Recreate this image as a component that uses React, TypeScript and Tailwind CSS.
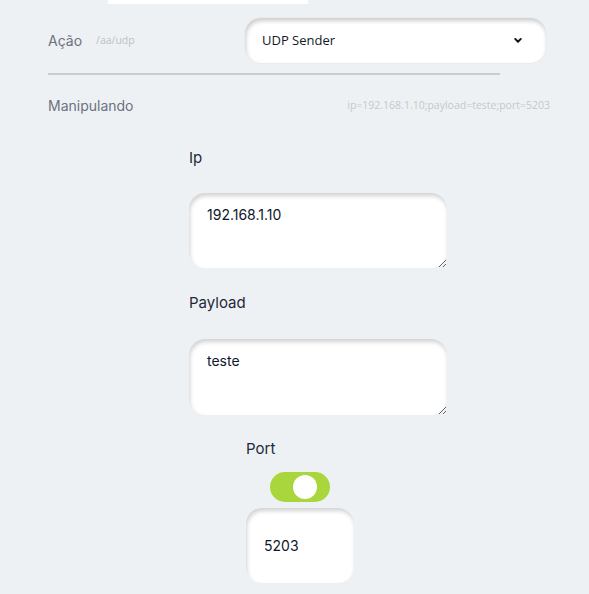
import { useState } from 'react';

const App = () => {
  const [enabled, setEnabled] = useState(true);

  return (
    <div className="min-h-screen w-full bg-[#eef1f4] font-['Inter',sans-serif]">
      {/* top strip */}
      <div className="ml-[108px] h-[4px] w-[200px] bg-white" />

      {/* Ação row */}
      <div className="flex items-center pl-[48px] pr-[43px] pt-[14px]">
        <span className="text-[14px] text-[#6b7280]">Ação</span>
        <span className="ml-[14px] font-['Open_Sans',sans-serif] text-[10.5px] text-[#bcc0c6]">/aa/udp</span>
        <div className="relative ml-auto flex h-[45px] w-[301px] items-center rounded-[16px] bg-white pl-[17px] shadow-[inset_1px_3px_4px_rgba(0,0,0,0.2),0_0_0_1px_rgba(0,0,0,0.02)]">
          <span className="font-['Open_Sans',sans-serif] text-[13px] text-[#111827]">UDP Sender</span>
          <svg className="absolute right-[24px] top-[19px] h-[7px] w-[8px]" viewBox="0 0 10 8" fill="none">
            <path d="M1.5 2 L5 5.5 L8.5 2" stroke="#111" strokeWidth="2.4" strokeLinecap="round" strokeLinejoin="round" />
          </svg>
        </div>
      </div>

      {/* divider */}
      <div className="ml-[48px] mt-[10px] h-[2px] w-[452px] bg-[#c9cdd2]" />

      {/* Manipulando row */}
      <div className="flex items-center justify-between pl-[48px] pr-[39px] pt-[20px]">
        <span className="text-[14px] text-[#6b7280]">Manipulando</span>
        <span className="font-['Open_Sans',sans-serif] text-[10.5px] text-[#c4c8cd]">ip=192.168.1.10;payload=teste;port=5203</span>
      </div>

      {/* fields */}
      <div className="ml-[189px] mt-[32px] flex flex-col">
        <label className="text-[15px] leading-[20px] text-[#1e293b]">Ip</label>
        <textarea
          defaultValue="192.168.1.10"
          className="mt-[25px] h-[75px] w-[258px] rounded-[16px] bg-white px-[18px] pt-[11px] text-[14px] text-[#0f172a] outline-none shadow-[inset_1px_3px_4px_rgba(0,0,0,0.18)]"
        />

        <label className="mt-[25px] text-[15px] leading-[20px] text-[#1e293b]">Payload</label>
        <textarea
          defaultValue="teste"
          className="mt-[26px] h-[76px] w-[258px] rounded-[16px] bg-white px-[18px] pt-[11px] text-[14px] text-[#0f172a] outline-none shadow-[inset_1px_3px_4px_rgba(0,0,0,0.18)]"
        />

        <div className="ml-[57px] mt-[24px] flex w-[108px] flex-col">
          <label className="text-[15px] leading-[20px] text-[#1e293b]">Port</label>
          <button
            onClick={() => setEnabled(!enabled)}
            className={`ml-[24px] mt-[13px] flex h-[30px] w-[60px] items-center rounded-full ${enabled ? 'bg-[#a9d63c]' : 'bg-gray-300'}`}
          >
            <span className={`block h-[24px] w-[24px] rounded-full bg-white ${enabled ? 'ml-[23px]' : 'ml-[3px]'}`} />
          </button>
          <input
            defaultValue="5203"
            className="mt-[6px] h-[75px] w-[108px] rounded-[16px] bg-white px-[18px] text-[14px] text-[#0f172a] outline-none shadow-[inset_1px_3px_4px_rgba(0,0,0,0.18)]"
          />
        </div>
      </div>
    </div>
  );
};

export default App;
